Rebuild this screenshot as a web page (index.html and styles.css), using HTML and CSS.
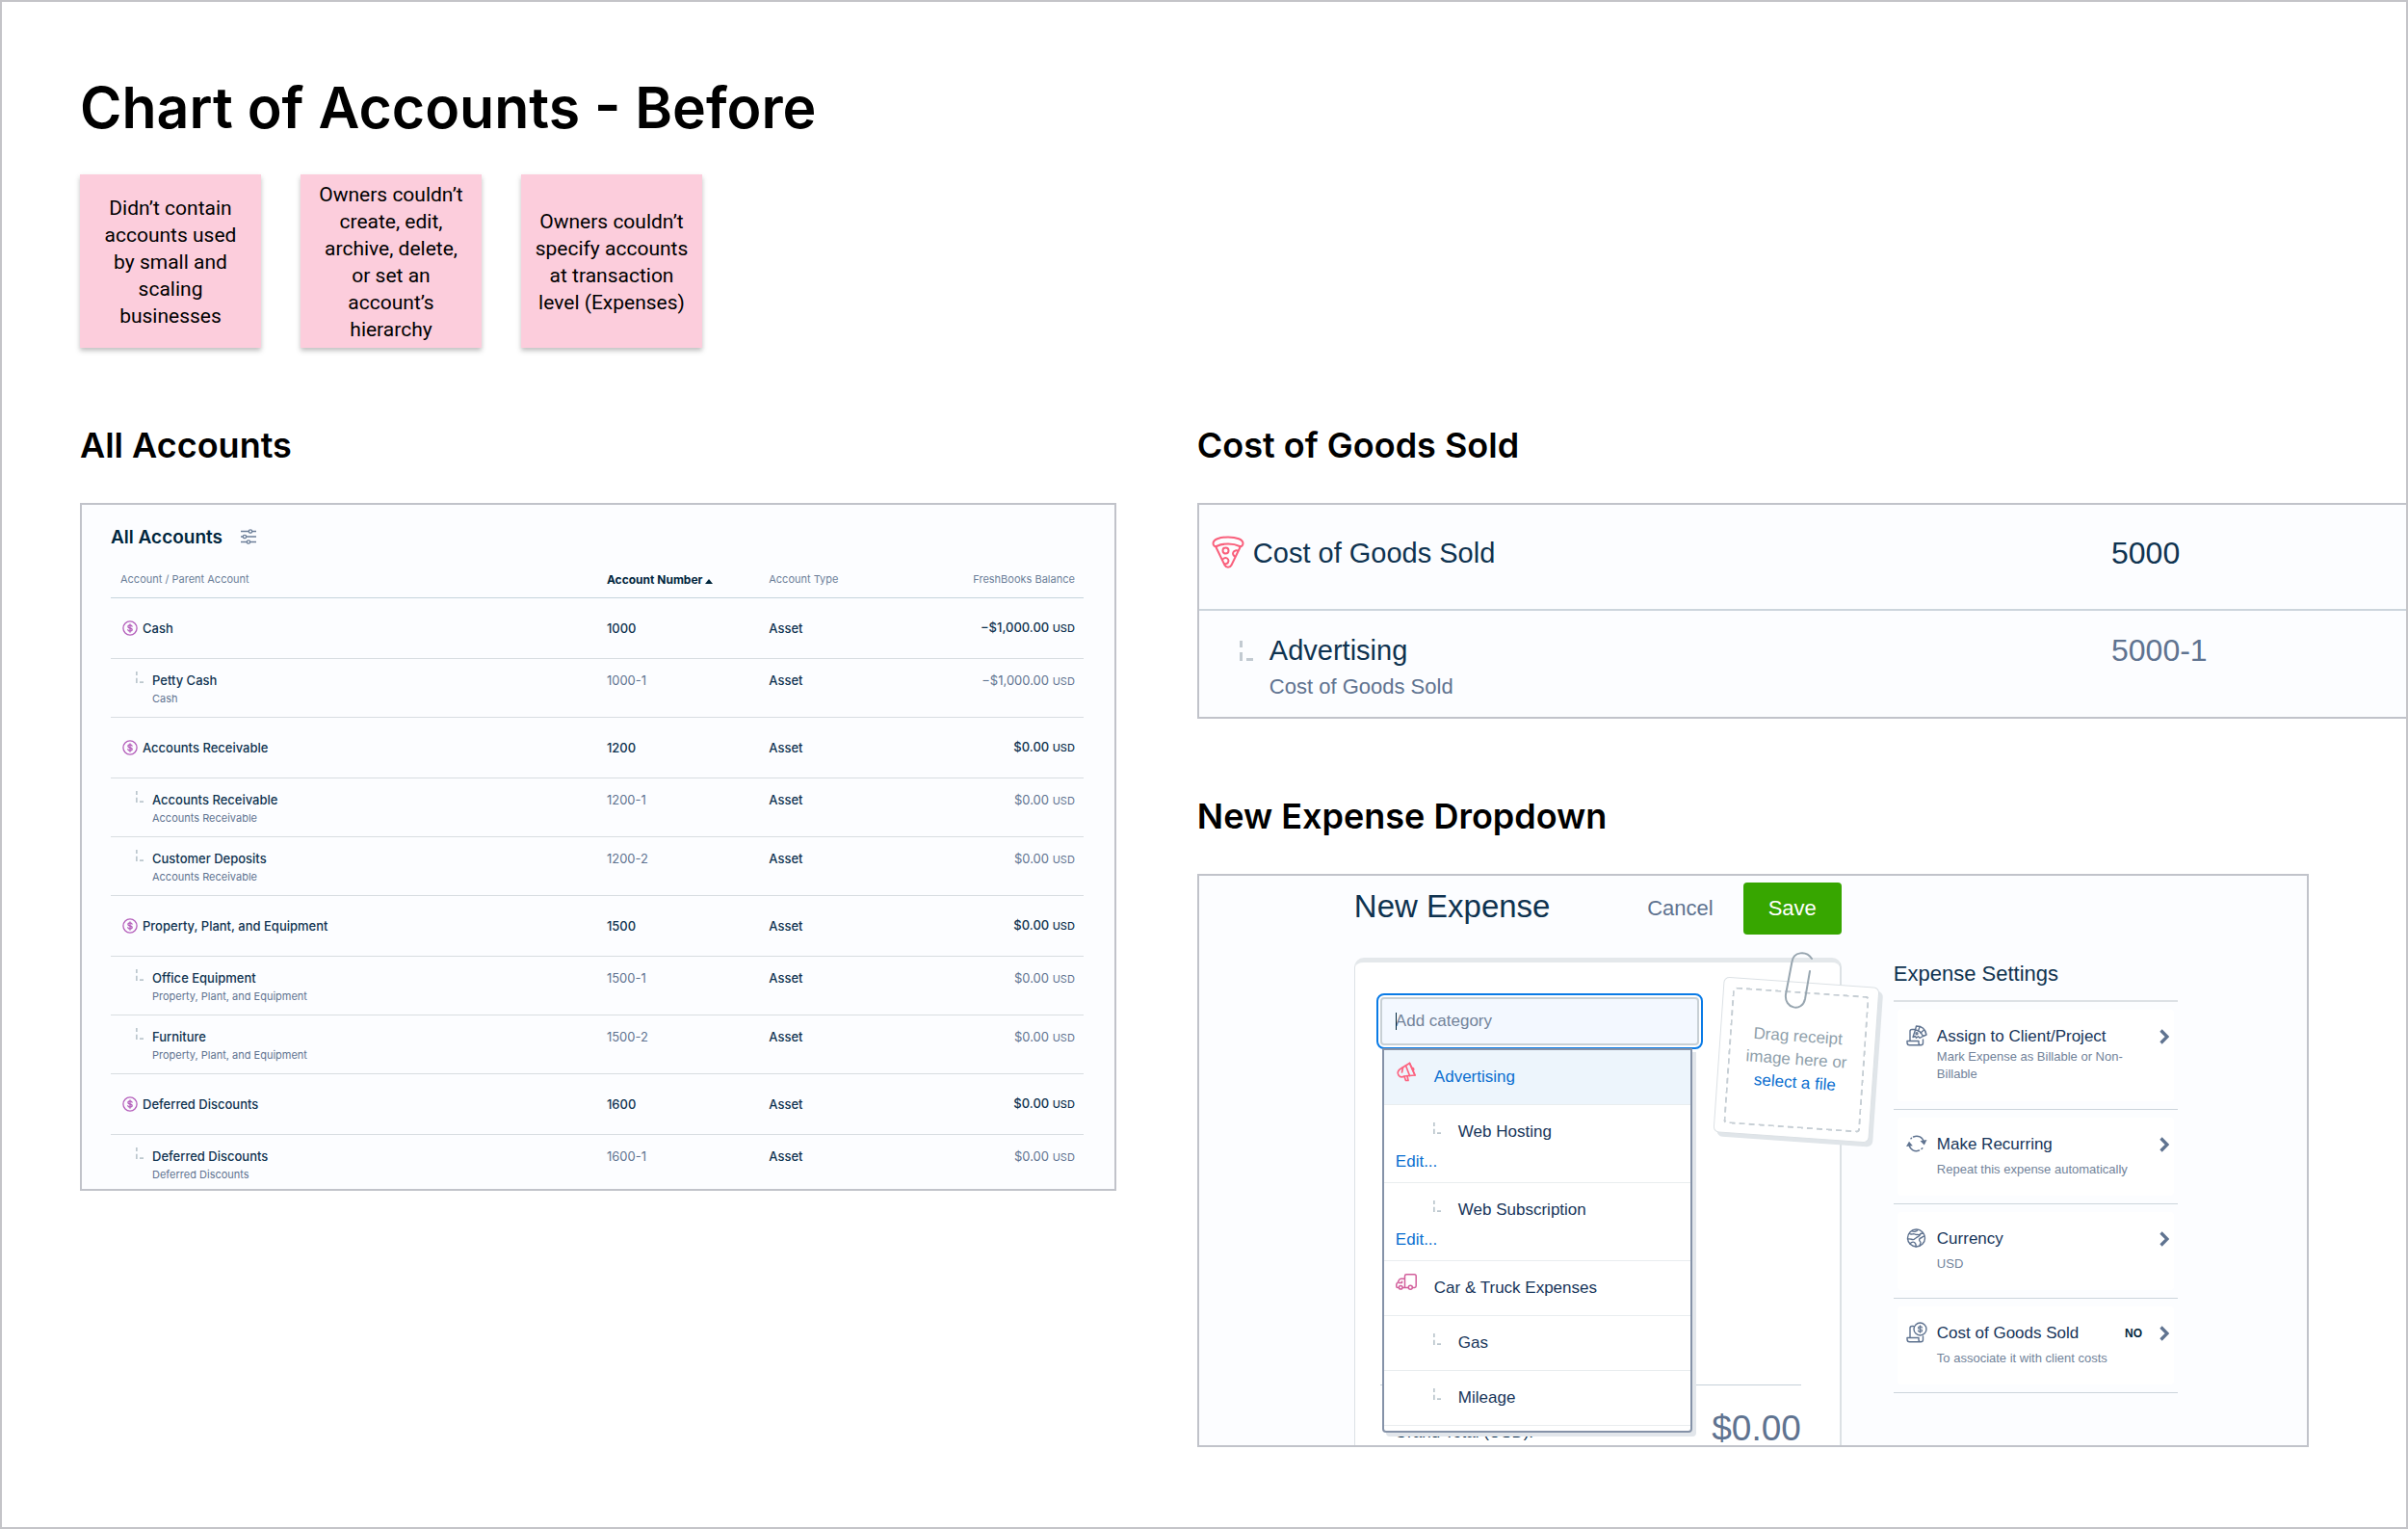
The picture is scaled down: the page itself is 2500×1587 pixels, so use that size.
FILE: index.html
```html
<!DOCTYPE html>
<html lang="en">
<head>
    <meta charset="UTF-8">
    <meta name="viewport" content="width=device-width, initial-scale=1.0">
    <title>Chart of Accounts - Before</title>
    <link rel="stylesheet" href="styles.css">
</head>
<body>
    <svg class="sprite" aria-hidden="true">
        <symbol id="coin" viewBox="0 0 16 16">
            <g fill="none" stroke="currentColor" stroke-width="1.3" stroke-linecap="round">
                <circle cx="8" cy="8" r="7.1"/>
                <path d="M10.1 6.2c-.2-.9-1-1.3-2.1-1.3s-2.1.5-2.1 1.5S6.800 7.800 8 8s2.200.5 2.200 1.600-1 1.500-2.200 1.500-2.100-.5-2.200-1.400M8 3.800v8.400"/>
            </g>
        </symbol>
        <symbol id="branch" viewBox="0 0 14 21">
            <path fill="currentColor" d="M0 0h3v7H0zM0 12h3v9H0zM7 18h7v3H7z"/>
        </symbol>
        <symbol id="chevron" viewBox="0 0 10 16">
            <path d="M1.500 1.500L8 8l-6.500 6.500" fill="none" stroke="currentColor" stroke-width="3.300"/>
        </symbol>
    </svg>

    <main class="board">
        <h1>Chart of Accounts - Before</h1>
        <div class="notes">
            <p class="note">Didn’t contain accounts used by small and scaling businesses</p>
            <p class="note">Owners couldn’t create, edit, archive, delete, or set an account’s hierarchy</p>
            <p class="note">Owners couldn’t specify accounts at transaction level (Expenses)</p>
        </div>

        <div class="columns">
            <section>
                <h2>All Accounts</h2>
                <div class="panel accounts">
                    <div class="accounts-title">
                        <h3>All Accounts</h3>
                        <button class="icon-btn" aria-label="Filters">
                            <svg width="16" height="16" viewBox="0 0 16 16" fill="none" stroke="currentColor" stroke-width="1.3">
                                <path d="M0 2.500h8M12 2.500h4M0 8h2M6 8h10M0 13.500h6M10 13.500h6"/>
                                <circle cx="10" cy="2.500" r="1.700"/>
                                <circle cx="4" cy="8" r="1.700"/>
                                <circle cx="8" cy="13.500" r="1.700"/>
                            </svg>
                        </button>
                    </div>
                    <table class="accounts-table">
                        <thead>
                            <tr>
                                <th class="col-name">Account / Parent Account</th>
                                <th class="col-number"><button class="sort-btn">Account Number <svg width="8" height="5" viewBox="0 0 8 5"><path d="M4 0l4 5H0z" fill="currentColor"/></svg></button></th>
                                <th class="col-type">Account Type</th>
                                <th class="col-balance">FreshBooks Balance</th>
                            </tr>
                        </thead>
                        <tbody>
                            <tr class="parent">
                                <td><div class="account"><svg class="coin"><use href="#coin"/></svg><span>Cash</span></div></td>
                                <td>1000</td>
                                <td>Asset</td>
                                <td class="balance">−$1,000.00 <small>USD</small></td>
                            </tr>
                            <tr class="child">
                                <td><div class="account"><svg class="branch"><use href="#branch"/></svg><span>Petty Cash<small>Cash</small></span></div></td>
                                <td class="light">1000-1</td>
                                <td>Asset</td>
                                <td class="balance light">−$1,000.00 <small>USD</small></td>
                            </tr>
                            <tr class="parent">
                                <td><div class="account"><svg class="coin"><use href="#coin"/></svg><span>Accounts Receivable</span></div></td>
                                <td>1200</td>
                                <td>Asset</td>
                                <td class="balance">$0.00 <small>USD</small></td>
                            </tr>
                            <tr class="child">
                                <td><div class="account"><svg class="branch"><use href="#branch"/></svg><span>Accounts Receivable<small>Accounts Receivable</small></span></div></td>
                                <td class="light">1200-1</td>
                                <td>Asset</td>
                                <td class="balance light">$0.00 <small>USD</small></td>
                            </tr>
                            <tr class="child">
                                <td><div class="account"><svg class="branch"><use href="#branch"/></svg><span>Customer Deposits<small>Accounts Receivable</small></span></div></td>
                                <td class="light">1200-2</td>
                                <td>Asset</td>
                                <td class="balance light">$0.00 <small>USD</small></td>
                            </tr>
                            <tr class="parent">
                                <td><div class="account"><svg class="coin"><use href="#coin"/></svg><span>Property, Plant, and Equipment</span></div></td>
                                <td>1500</td>
                                <td>Asset</td>
                                <td class="balance">$0.00 <small>USD</small></td>
                            </tr>
                            <tr class="child">
                                <td><div class="account"><svg class="branch"><use href="#branch"/></svg><span>Office Equipment<small>Property, Plant, and Equipment</small></span></div></td>
                                <td class="light">1500-1</td>
                                <td>Asset</td>
                                <td class="balance light">$0.00 <small>USD</small></td>
                            </tr>
                            <tr class="child">
                                <td><div class="account"><svg class="branch"><use href="#branch"/></svg><span>Furniture<small>Property, Plant, and Equipment</small></span></div></td>
                                <td class="light">1500-2</td>
                                <td>Asset</td>
                                <td class="balance light">$0.00 <small>USD</small></td>
                            </tr>
                            <tr class="parent">
                                <td><div class="account"><svg class="coin"><use href="#coin"/></svg><span>Deferred Discounts</span></div></td>
                                <td>1600</td>
                                <td>Asset</td>
                                <td class="balance">$0.00 <small>USD</small></td>
                            </tr>
                            <tr class="child">
                                <td><div class="account"><svg class="branch"><use href="#branch"/></svg><span>Deferred Discounts<small>Deferred Discounts</small></span></div></td>
                                <td class="light">1600-1</td>
                                <td>Asset</td>
                                <td class="balance light">$0.00 <small>USD</small></td>
                            </tr>
                        </tbody>
                    </table>
                </div>
            </section>

            <div class="right-column">
                <section>
                    <h2>Cost of Goods Sold</h2>
                    <table class="panel cogs-table">
                        <tr>
                            <td>
                                <div class="cogs-account">
                                    <svg class="pizza" width="34" height="34" viewBox="0 0 34 34" fill="none" stroke="currentColor" stroke-width="2" stroke-linejoin="round">
                                        <path d="M1.500 8C1.500 4 8 1.500 17 1.500S32.500 4 32.500 8c0 2-1.500 3.500-3.500 3-3-1.500-7-2.500-12-2.500S8 9.500 5 11c-2 .5-3.500-1-3.500-3z"/>
                                        <path d="M4 11l9.500 19.500c1.500 3 5.500 3 7 0L30 11"/>
                                        <circle cx="14.500" cy="15.500" r="3"/>
                                        <path d="M27.500 16.200a3.200 3.200 0 1 0-2.700 5.500M11 25.500c.5-2 3-3.200 5-2 2.200 1.500 1.800 4.500-.5 5.500-1 .4-2 .3-2.800-.2"/>
                                    </svg>
                                    <span>Cost of Goods Sold</span>
                                </div>
                            </td>
                            <td class="cogs-number">5000</td>
                        </tr>
                        <tr>
                            <td>
                                <div class="cogs-account cogs-child">
                                    <svg class="branch-lg"><use href="#branch"/></svg>
                                    <span>Advertising<small>Cost of Goods Sold</small></span>
                                </div>
                            </td>
                            <td class="cogs-number light">5000-1</td>
                        </tr>
                    </table>
                </section>

                <section>
                    <h2>New Expense Dropdown</h2>
                    <div class="panel expense">
                        <form class="expense-form" onsubmit="return false">
                            <div class="form-header">
                                <h3>New Expense</h3>
                                <button type="button" class="cancel-btn">Cancel</button>
                                <button type="submit" class="save-btn">Save</button>
                            </div>
                            <div class="card">
                                <div class="category">
                                    <input type="text" class="category-input" placeholder="Add category" aria-label="Add category">
                                    <ul class="menu">
                                        <li class="selected">
                                            <button type="button">
                                                <svg class="menu-icon adv" viewBox="0 0 22 22" fill="none" stroke="currentColor" stroke-width="1.700" stroke-linejoin="round" stroke-linecap="round">
                                                    <path d="M14.500 2.500l-9 5.500c-3.500 2-4 5-2.500 7 1.500 2.200 4 2.200 6 1l11-1z"/>
                                                    <path d="M14.500 2.500l5.500 12.500M10.500 5l4 10.500M16.500 7c2 0 2.800 2 1.700 3.400M7.500 7l-1 5M9 16.500l1.500 4h2.500l-1-4.800"/>
                                                </svg>
                                                Advertising
                                            </button>
                                        </li>
                                        <li class="sub has-link">
                                            <button type="button"><svg class="branch"><use href="#branch"/></svg>Web Hosting</button>
                                            <a href="#">Edit...</a>
                                        </li>
                                        <li class="sub has-link">
                                            <button type="button"><svg class="branch"><use href="#branch"/></svg>Web Subscription</button>
                                            <a href="#">Edit...</a>
                                        </li>
                                        <li>
                                            <button type="button">
                                                <svg class="menu-icon truck" viewBox="0 0 22 22" fill="none" stroke="currentColor" stroke-width="1.500" stroke-linejoin="round">
                                                    <path d="M3.500 16.500H2c-.8 0-1.200-.5-1.200-1.200v-2c0-1 .4-1.500 1.200-1.800l1.500-3c.4-.8 1-1.300 2-1.300h4M7 16.500h6M17.500 16.500h2c1 0 1.700-.7 1.700-1.700V4.500c0-1-.7-1.700-1.700-1.700h-8.300c-1 0-1.700.7-1.700 1.700v11.500M3 11.500h3.500V9.500"/>
                                                    <circle cx="5.200" cy="16.300" r="1.800"/>
                                                    <circle cx="15.300" cy="16.300" r="2"/>
                                                </svg>
                                                Car &amp; Truck Expenses
                                            </button>
                                        </li>
                                        <li class="sub">
                                            <button type="button"><svg class="branch"><use href="#branch"/></svg>Gas</button>
                                        </li>
                                        <li class="sub">
                                            <button type="button"><svg class="branch"><use href="#branch"/></svg>Mileage</button>
                                        </li>
                                    </ul>
                                </div>
                                <div class="receipt">
                                    <div class="receipt-drop">
                                        <p>Drag receipt<br>image here or<br><a href="#">select a file</a></p>
                                    </div>
                                </div>
                                <svg class="clip" width="32" height="62" viewBox="0 0 32 62" fill="none" stroke="currentColor" stroke-width="2" stroke-linecap="round">
                                    <path d="M29 8C23-1 10 1 8.500 11L2 45c-2 15 17 19 20 5l5-29"/>
                                </svg>
                                <div class="total">
                                    <span>Grand Total (USD):</span>
                                    <strong>$0.00</strong>
                                </div>
                            </div>
                        </form>

                        <aside class="settings">
                            <h4>Expense Settings</h4>
                            <ul>
                                <li>
                                    <button class="setting setting-tall">
                                        <svg class="setting-icon" viewBox="0 0 22 22" fill="none" stroke="currentColor" stroke-width="1.400" stroke-linejoin="round" stroke-linecap="round">
                                            <path d="M9 4.500H6c-1.200 0-2 .8-2 2V16M1 16.500h12v2c0 1.400 1 2.300 2.200 2.300s2.300-.9 2.300-2.300V15M1 16.500v1.500c0 1.800 1 2.800 2.500 2.800h11.700"/>
                                            <path d="M10.500 1c5.500 0 9.500 3.500 10.500 9l-3.500 1.500C16 8 13.500 5.500 9.500 5z"/>
                                            <path d="M9.500 5L7 12.500l2.500-1 1 1.800 2-1.500 1.500 1.500 3.500-1.800M14 2l-1.500 4M18.500 5L15 8"/>
                                            <circle cx="11" cy="8.800" r="1"/>
                                        </svg>
                                        <span class="setting-text">Assign to Client/Project<small>Mark Expense as Billable or Non-Billable</small></span>
                                        <svg class="chevron"><use href="#chevron"/></svg>
                                    </button>
                                </li>
                                <li>
                                    <button class="setting">
                                        <svg class="setting-icon" viewBox="0 0 22 22" fill="none" stroke="currentColor" stroke-width="1.500" stroke-linecap="round">
                                            <path d="M7.500 4C12 1.800 17.300 4.200 18.300 9.500M13.500 18C9 20 4 17.500 3.200 12.500M5.500 5.200l-.5.500M16 16.500l.8-.8"/>
                                            <path fill="currentColor" stroke="none" d="M14.500 8.200l7-1.200-2.700 5.500zM0 14l3-5.200 3.800 4.400z"/>
                                        </svg>
                                        <span class="setting-text">Make Recurring<small>Repeat this expense automatically</small></span>
                                        <svg class="chevron"><use href="#chevron"/></svg>
                                    </button>
                                </li>
                                <li>
                                    <button class="setting">
                                        <svg class="setting-icon" viewBox="0 0 22 22" fill="none" stroke="currentColor" stroke-width="1.400" stroke-linejoin="round" stroke-linecap="round">
                                            <circle cx="10.500" cy="11" r="9"/>
                                            <path d="M3.500 6.500c2 1.500 4-.5 5.500.5s4-.2 4.500 1-2 2-3.500 3-1.500 2-3.500 1.500-3-1-5-.5M6 3.500c1.500 1.500 5 1 6-1M17.500 6c-2 0-3.500.8-3.500 2.500M19 9c-2 .2-2.500 1.500-4 2s-2 2.500-.5 3.500 0 2.500-.5 4.500M4 17c1-1.500 3-2.500 4.500-1.500s2 2 1.500 4.500"/>
                                        </svg>
                                        <span class="setting-text">Currency<small>USD</small></span>
                                        <svg class="chevron"><use href="#chevron"/></svg>
                                    </button>
                                </li>
                                <li>
                                    <button class="setting">
                                        <svg class="setting-icon" viewBox="0 0 22 22" fill="none" stroke="currentColor" stroke-width="1.400" stroke-linejoin="round" stroke-linecap="round">
                                            <circle cx="14.500" cy="7.500" r="6.500"/>
                                            <path stroke-width="1.200" d="M16.500 6c-.3-.8-1-1.100-2-1.100-1.200 0-2 .4-2 1.300s.8 1.100 2 1.300 2.100.4 2.100 1.400-.9 1.300-2.100 1.300-1.900-.4-2.100-1.200M14.500 3.800v7.400"/>
                                            <path d="M7.500 4.500H6c-1.200 0-2 .8-2 2V16M1 16.500h12v2c0 1.400 1 2.300 2.200 2.300s2.300-.9 2.300-2.300V15M1 16.500v1.500c0 1.800 1 2.800 2.500 2.800h11.700"/>
                                        </svg>
                                        <span class="setting-text">Cost of Goods Sold<small>To associate it with client costs</small></span>
                                        <b>NO</b>
                                        <svg class="chevron"><use href="#chevron"/></svg>
                                    </button>
                                </li>
                            </ul>
                        </aside>
                    </div>
                </section>
            </div>
        </div>
    </main>
</body>
</html>
```

FILE: styles.css
```css
* {
    box-sizing: border-box;
}
body {
    margin: 0;
    background-color: #fff;
    color: #000;
    font-family: "Liberation Sans", Arial, sans-serif;
}
h1, h2, h3, h4, p, ul {
    margin: 0;
    padding: 0;
}
ul {
    list-style: none;
}
button {
    padding: 0;
    border: none;
    background: none;
    color: inherit;
    font: inherit;
    text-align: left;
    cursor: pointer;
}
a {
    color: #0a6fd0;
    text-decoration: none;
}
.sprite {
    display: none;
}
.board {
    min-height: 100vh;
    padding: 70px 0 60px 81px;
    border: 2px solid #c4c4c8;
    overflow: hidden;
}
h1 {
    margin-bottom: 29px;
    font-family: Inter, sans-serif;
    font-size: 59px;
    font-weight: 600;
    line-height: 80px;
}
h2 {
    margin-bottom: 38px;
    font-family: Inter, sans-serif;
    font-size: 36px;
    font-weight: 600;
    line-height: 44px;
}
.notes {
    display: flex;
    gap: 41px;
    margin-bottom: 79px;
}
.note {
    display: flex;
    align-items: center;
    justify-content: center;
    width: 188px;
    height: 180px;
    padding: 2px 14px 0;
    background-color: #fccddc;
    box-shadow: 0 3px 5px rgba(0, 0, 0, 0.25);
    font-family: Roboto, sans-serif;
    font-size: 21px;
    line-height: 28px;
    text-align: center;
}
.columns {
    display: grid;
    grid-template-columns: 6fr 7fr;
    gap: 84px;
    align-items: start;
}
.right-column {
    display: flex;
    flex-direction: column;
    gap: 79px;
}
.panel {
    border: 2px solid #c1c3ca;
    background-color: #fcfdff;
    color: #0f3350;
}
.light {
    color: #5f7390;
}
.branch {
    width: 8px;
    height: 12px;
    color: #bcc7ce;
}

/* all accounts */
.accounts {
    padding: 20px 32px 0 30px;
    font-family: Inter, sans-serif;
}
.accounts-title {
    display: flex;
    align-items: center;
    gap: 19px;
    height: 26px;
}
.accounts-title h3 {
    color: #00263d;
    font-size: 19px;
    font-weight: 600;
}
.icon-btn {
    height: 16px;
    color: #6c7f99;
    line-height: 0;
}
.accounts-table {
    width: 100%;
    border-collapse: separate;
    border-spacing: 0;
    table-layout: fixed;
    font-size: 13px;
    font-weight: 500;
    line-height: 19px;
}
.accounts-table th {
    height: 51px;
    padding: 13px 9px 0 10px;
    border-bottom: 1px solid #c6d5dc;
    color: #6c7f99;
    font-size: 11px;
    font-weight: 400;
    text-align: left;
}
.accounts-table td {
    padding: 0 9px 0 10px;
    border-bottom: 1px solid #d8dde1;
}
.accounts-table .col-name {
    width: 50%;
}
.accounts-table .col-number {
    width: calc(100% / 6);
}
.accounts-table .col-balance {
    text-align: right;
}
.sort-btn {
    color: #00263d;
    font-size: 12px;
    font-weight: 700;
}
.parent td {
    height: 63px;
}
.accounts-table .child td {
    height: 61px;
    padding-top: 13px;
    vertical-align: top;
}
.accounts-table tbody tr:last-child td {
    height: 56px;
    border-bottom: none;
}
.accounts-table .child .light {
    font-weight: 400;
}
.accounts-table .balance {
    text-align: right;
}
.balance small {
    font-size: 11px;
}
.account {
    display: flex;
    align-items: center;
    gap: 5px;
    padding-left: 2px;
}
.coin {
    width: 16px;
    height: 16px;
    color: #b45fbb;
}
.child .account {
    align-items: flex-start;
    gap: 9px;
    padding-left: 16px;
}
.account small {
    display: block;
    color: #5f7390;
    font-size: 11px;
    font-weight: 400;
}

/* cost of goods sold */
.cogs-table {
    width: 100%;
    border-right: none;
    border-spacing: 0;
    font-size: 29px;
    line-height: 37px;
}
.cogs-table td {
    height: 110px;
    padding: 0;
    vertical-align: top;
}
.cogs-table tr:first-child td {
    padding-top: 32px;
    border-bottom: 2px solid #ccd5dc;
}
.cogs-table tr:last-child td {
    padding-top: 23px;
}
.cogs-number {
    width: 306px;
    font-size: 32px;
}
.cogs-account {
    display: flex;
    gap: 9px;
    padding-left: 13px;
}
.cogs-child {
    align-items: flex-start;
    gap: 17px;
    padding-left: 42px;
}
.cogs-account small {
    display: block;
    color: #5f7390;
    font-size: 22px;
}
.pizza {
    color: #f9607c;
}
.branch-lg {
    width: 14px;
    height: 21px;
    margin-top: 8px;
    color: #c2cad1;
}

/* new expense */
.expense {
    display: grid;
    grid-template-columns: 12fr 7fr;
    gap: 54px;
    margin-right: 101px;
    padding: 0 134px 0 161px;
    overflow: hidden;
}
.form-header {
    display: flex;
    align-items: center;
    gap: 31px;
    height: 85px;
    padding-bottom: 18px;
    font-size: 22px;
}
.form-header h3 {
    flex: 1;
    margin-bottom: 4px;
    font-size: 33px;
    font-weight: 400;
}
.cancel-btn {
    color: #5f7390;
}
.save-btn {
    height: 54px;
    padding: 0 26px;
    border-radius: 4px;
    background-color: #37a600;
    color: #fff;
}
.card {
    position: relative;
    display: flex;
    flex-direction: column;
    justify-content: space-between;
    height: 506px;
    padding: 36px 40px 0 26px;
    border: 1px solid #dce1e5;
    border-top: 5px solid #e4e8eb;
    border-right-width: 2px;
    border-bottom: none;
    border-radius: 10px 10px 0 0;
    background-color: #fff;
}
.category {
    position: relative;
    width: 331px;
    font-size: 17px;
}
.category::before {
    content: "";
    position: absolute;
    top: 16px;
    left: 16px;
    width: 1px;
    height: 18px;
    background-color: #00263d;
}
.category-input {
    display: block;
    width: 100%;
    height: 50px;
    padding: 0 14px;
    border: 2px solid #c8d0d5;
    border-radius: 4px;
    outline: 2px solid #0a7be6;
    outline-offset: 2px;
    background-color: #f3f8ff;
    font: inherit;
}
.category-input::placeholder {
    color: #72839a;
    opacity: 1;
}
.menu {
    position: absolute;
    z-index: 1;
    top: 53px;
    left: 2px;
    width: 322px;
    padding-bottom: 5px;
    border: 2px solid #8592a8;
    border-radius: 0 0 4px 4px;
    background-color: #fff;
    box-shadow: 4px 4px 0 #e2e6eb;
    color: #17355a;
}
.menu li {
    padding: 18px 12px;
    border-bottom: 1px solid #e9edef;
    line-height: 20px;
}
.menu .has-link {
    padding-bottom: 15px;
}
.menu button {
    display: flex;
    gap: 18px;
    width: 100%;
}
.menu .selected {
    background-color: #edf5fc;
    color: #0a6fd0;
}
.menu-icon {
    width: 22px;
    height: 22px;
    margin-top: -7px;
}
.adv {
    color: #fc6480;
}
.truck {
    color: #d25f9b;
}
.menu .sub button {
    padding-left: 39px;
}
.menu .sub a {
    display: block;
    padding-top: 15px;
    line-height: 12px;
}
.receipt {
    position: absolute;
    top: 20px;
    right: -36px;
    width: 162px;
    height: 162px;
    padding: 9px;
    border: 1px solid #dce1e5;
    border-radius: 6px;
    background-color: #fff;
    box-shadow: 4px 4px 0 #e0e5e9;
    transform: rotate(4deg);
}
.receipt-drop {
    display: flex;
    align-items: center;
    justify-content: center;
    height: 100%;
    border: 2px dashed #c6ced4;
    border-radius: 4px;
    color: #8f9fab;
    font-size: 17px;
    line-height: 24px;
    text-align: center;
}
.clip {
    position: absolute;
    top: -12px;
    right: 26px;
    color: #98a6b0;
}
.total {
    display: flex;
    align-items: center;
    justify-content: space-between;
    height: 63px;
    padding-left: 15px;
    border-top: 1px solid #c6d0d9;
    font-size: 17px;
}
.total strong {
    padding-top: 28px;
    color: #5f7390;
    font-size: 37px;
    font-weight: 400;
    line-height: 36px;
}
.total span {
    padding-top: 36px;
}
.settings {
    padding-top: 87px;
    color: #17355a;
}
.settings h4 {
    color: #0f3350;
    font-size: 22px;
    font-weight: 400;
    line-height: 30px;
}
.settings ul {
    margin-top: 12px;
    border-top: 2px solid #dde1e5;
}
.settings li {
    padding: 8px 4px;
    border-bottom: 1px solid #ccd5dc;
}
.setting {
    display: flex;
    align-items: flex-start;
    width: 100%;
    height: 81px;
    padding: 16px 5px 0 9px;
    border-radius: 4px;
    background-color: #fff;
    font-size: 17px;
    line-height: 24px;
}
.setting-tall {
    height: 95px;
}
.setting-icon {
    width: 22px;
    height: 22px;
    margin-right: 10px;
    color: #5f7390;
}
.setting-text {
    flex: 1;
}
.setting small {
    display: block;
    max-width: 215px;
    color: #72839a;
    font-size: 13px;
    line-height: 28px;
}
.setting-tall small {
    line-height: 18px;
}
.setting b {
    margin-right: 18px;
    color: #00263d;
    font-size: 12px;
}
.chevron {
    width: 10px;
    height: 16px;
    margin-top: 4px;
    color: #5f7390;
}
```
